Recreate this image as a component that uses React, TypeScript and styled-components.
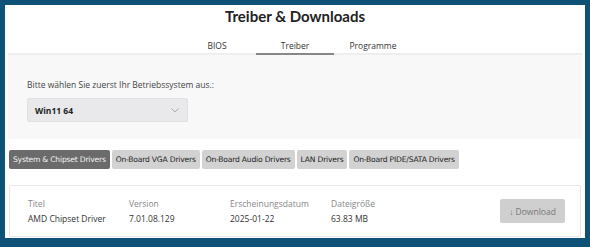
import styled, { createGlobalStyle } from "styled-components";

const GlobalStyle = createGlobalStyle`
  html, body {
    margin: 0;
    padding: 0;
    background: #0e5278;
  }
  body {
    font-family: "Open Sans", "Noto Sans", sans-serif;
    color: #222;
  }
`;

const Frame = styled.div`
  width: 590px;
  height: 247px;
  box-sizing: border-box;
  padding: 5px 5px 9px 5px;
  background: #0e5278;
`;

const Page = styled.div`
  height: 100%;
  background: #fff;
  padding: 0 3px;
  box-sizing: border-box;
  display: flex;
  flex-direction: column;
  overflow: hidden;
`;

const Title = styled.h1`
  margin: 0;
  padding-top: 2px;
  height: 22px;
  box-sizing: border-box;
  text-align: center;
  font-family: "Lato", "Noto Sans", sans-serif;
  font-size: 15px;
  line-height: 18px;
  font-weight: 700;
  color: #222;
`;

const TabBar = styled.div`
  display: flex;
  justify-content: center;
  margin-top: 9px;
  border-bottom: 2px solid #eeeeee;
`;

const Tab = styled.div<{ $active?: boolean }>`
  width: 78px;
  text-align: center;
  font-size: 8.5px;
  line-height: 11px;
  padding: 4px 0 2px;
  color: #333;
  border-bottom: 2px solid ${(p) => (p.$active ? "#888" : "transparent")};
  margin-bottom: -2px;
`;

const OsPanel = styled.div`
  background: #f8f8f8;
  height: 84px;
  padding: 24px 0 0 19px;
  box-sizing: border-box;
  flex-shrink: 0;
`;

const Label = styled.div`
  font-size: 8.5px;
  line-height: 12px;
  color: #444;
`;

const Select = styled.div`
  margin-top: 7px;
  width: 161px;
  height: 24px;
  box-sizing: border-box;
  background: #e9e9ec;
  border: 1px solid #e0e0e4;
  border-radius: 2px;
  display: flex;
  align-items: center;
  justify-content: space-between;
  padding: 0 8px 0 7px;
  font-size: 8.5px;
  font-weight: 700;
  color: #222;
`;

const Categories = styled.div`
  display: flex;
  gap: 2px;
  margin-top: 11px;
  padding-left: 1px;
`;

const CatButton = styled.div<{ $active?: boolean }>`
  height: 19px;
  padding: 0 4px;
  display: flex;
  align-items: center;
  font-family: "DejaVu Sans", sans-serif;
  font-size: 7.6px;
  letter-spacing: -0.2px;
  border-radius: 2px;
  background: ${(p) => (p.$active ? "#6b6b6b" : "#d2d2d2")};
  color: ${(p) => (p.$active ? "#f2f2f2" : "#222")};
`;

const Card = styled.div`
  margin: 16px 1px 0 1px;
  height: 52px;
  box-sizing: border-box;
  flex-shrink: 0;
  border: 1px solid #e6e6e6;
  border-radius: 2px;
  display: flex;
  align-items: center;
  padding: 0 15px 0 18px;
`;

const Field = styled.div`
  width: 101px;
  display: flex;
  flex-direction: column;
  gap: 4px;
  font-size: 8.5px;
  line-height: 11px;
`;

const FieldLabel = styled.span`
  color: #888;
`;

const FieldValue = styled.span`
  color: #333;
`;

const DownloadButton = styled.div`
  margin-left: auto;
  width: 65px;
  height: 24px;
  background: #cfcfcf;
  border-radius: 2px;
  display: flex;
  align-items: center;
  justify-content: center;
  font-size: 8.5px;
  color: #777;
`;

const Chevron = () => (
  <svg width="8" height="5" viewBox="0 0 8 5" fill="none">
    <path d="M0.5 0.5 L4 4 L7.5 0.5" stroke="#999" strokeWidth="0.8" />
  </svg>
);

const categories = [
  "System & Chipset Drivers",
  "On-Board VGA Drivers",
  "On-Board Audio Drivers",
  "LAN Drivers",
  "On-Board PIDE/SATA Drivers",
];

const fields = [
  ["Titel", "AMD Chipset Driver"],
  ["Version", "7.01.08.129"],
  ["Erscheinungsdatum", "2025-01-22"],
  ["Dateigröße", "63.83 MB"],
];

export default function App() {
  return (
    <>
      <GlobalStyle />
      <Frame>
        <Page>
          <Title>Treiber &amp; Downloads</Title>
          <TabBar>
            <Tab>BIOS</Tab>
            <Tab $active>Treiber</Tab>
            <Tab>Programme</Tab>
          </TabBar>
          <OsPanel>
            <Label>Bitte wählen Sie zuerst Ihr Betriebssystem aus.:</Label>
            <Select>
              <span>Win11 64</span>
              <Chevron />
            </Select>
          </OsPanel>
          <Categories>
            {categories.map((c, i) => (
              <CatButton key={c} $active={i === 0}>
                {c}
              </CatButton>
            ))}
          </Categories>
          <Card>
            {fields.map(([l, v]) => (
              <Field key={l}>
                <FieldLabel>{l}</FieldLabel>
                <FieldValue>{v}</FieldValue>
              </Field>
            ))}
            <DownloadButton>↓ Download</DownloadButton>
          </Card>
        </Page>
      </Frame>
    </>
  );
}
